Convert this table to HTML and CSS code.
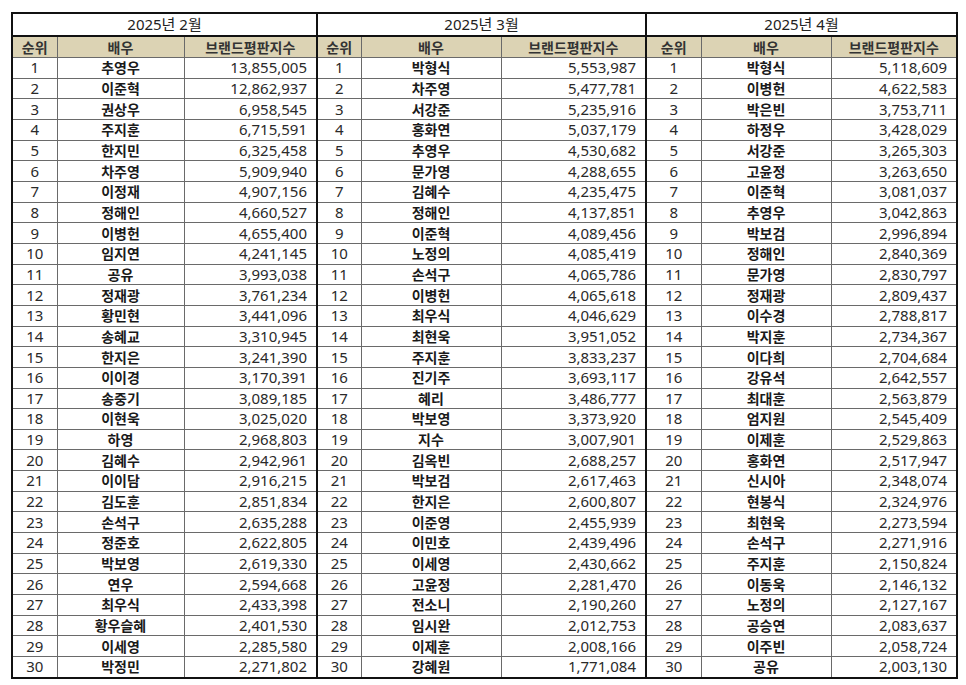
FILE: index.html
```html
<!DOCTYPE html>
<html lang="ko">
<head>
<meta charset="utf-8">
<title>배우 브랜드평판</title>
<link rel="stylesheet" href="styles.css">
</head>
<body>
<table class="rank">
<colgroup>
<col class="c-r1"><col class="c-n1"><col class="c-s1">
<col class="c-r2"><col class="c-n2"><col class="c-s2">
<col class="c-r3"><col class="c-n3"><col class="c-s3">
</colgroup>
<thead>
<tr class="title"><th colspan="3" class="sep">2025년 2월</th><th colspan="3" class="sep">2025년 3월</th><th colspan="3">2025년 4월</th></tr>
<tr class="head"><th>순위</th><th>배우</th><th class="sep">브랜드평판지수</th><th>순위</th><th>배우</th><th class="sep">브랜드평판지수</th><th>순위</th><th>배우</th><th>브랜드평판지수</th></tr>
</thead>
<tbody>
<tr><td>1</td><td class="n">추영우</td><td class="s sep">13,855,005</td><td>1</td><td class="n">박형식</td><td class="s sep">5,553,987</td><td>1</td><td class="n">박형식</td><td class="s">5,118,609</td></tr>
<tr><td>2</td><td class="n">이준혁</td><td class="s sep">12,862,937</td><td>2</td><td class="n">차주영</td><td class="s sep">5,477,781</td><td>2</td><td class="n">이병헌</td><td class="s">4,622,583</td></tr>
<tr><td>3</td><td class="n">권상우</td><td class="s sep">6,958,545</td><td>3</td><td class="n">서강준</td><td class="s sep">5,235,916</td><td>3</td><td class="n">박은빈</td><td class="s">3,753,711</td></tr>
<tr><td>4</td><td class="n">주지훈</td><td class="s sep">6,715,591</td><td>4</td><td class="n">홍화연</td><td class="s sep">5,037,179</td><td>4</td><td class="n">하정우</td><td class="s">3,428,029</td></tr>
<tr><td>5</td><td class="n">한지민</td><td class="s sep">6,325,458</td><td>5</td><td class="n">추영우</td><td class="s sep">4,530,682</td><td>5</td><td class="n">서강준</td><td class="s">3,265,303</td></tr>
<tr><td>6</td><td class="n">차주영</td><td class="s sep">5,909,940</td><td>6</td><td class="n">문가영</td><td class="s sep">4,288,655</td><td>6</td><td class="n">고윤정</td><td class="s">3,263,650</td></tr>
<tr><td>7</td><td class="n">이정재</td><td class="s sep">4,907,156</td><td>7</td><td class="n">김혜수</td><td class="s sep">4,235,475</td><td>7</td><td class="n">이준혁</td><td class="s">3,081,037</td></tr>
<tr><td>8</td><td class="n">정해인</td><td class="s sep">4,660,527</td><td>8</td><td class="n">정해인</td><td class="s sep">4,137,851</td><td>8</td><td class="n">추영우</td><td class="s">3,042,863</td></tr>
<tr><td>9</td><td class="n">이병헌</td><td class="s sep">4,655,400</td><td>9</td><td class="n">이준혁</td><td class="s sep">4,089,456</td><td>9</td><td class="n">박보검</td><td class="s">2,996,894</td></tr>
<tr><td>10</td><td class="n">임지연</td><td class="s sep">4,241,145</td><td>10</td><td class="n">노정의</td><td class="s sep">4,085,419</td><td>10</td><td class="n">정해인</td><td class="s">2,840,369</td></tr>
<tr><td>11</td><td class="n">공유</td><td class="s sep">3,993,038</td><td>11</td><td class="n">손석구</td><td class="s sep">4,065,786</td><td>11</td><td class="n">문가영</td><td class="s">2,830,797</td></tr>
<tr><td>12</td><td class="n">정재광</td><td class="s sep">3,761,234</td><td>12</td><td class="n">이병헌</td><td class="s sep">4,065,618</td><td>12</td><td class="n">정재광</td><td class="s">2,809,437</td></tr>
<tr><td>13</td><td class="n">황민현</td><td class="s sep">3,441,096</td><td>13</td><td class="n">최우식</td><td class="s sep">4,046,629</td><td>13</td><td class="n">이수경</td><td class="s">2,788,817</td></tr>
<tr><td>14</td><td class="n">송혜교</td><td class="s sep">3,310,945</td><td>14</td><td class="n">최현욱</td><td class="s sep">3,951,052</td><td>14</td><td class="n">박지훈</td><td class="s">2,734,367</td></tr>
<tr><td>15</td><td class="n">한지은</td><td class="s sep">3,241,390</td><td>15</td><td class="n">주지훈</td><td class="s sep">3,833,237</td><td>15</td><td class="n">이다희</td><td class="s">2,704,684</td></tr>
<tr><td>16</td><td class="n">이이경</td><td class="s sep">3,170,391</td><td>16</td><td class="n">진기주</td><td class="s sep">3,693,117</td><td>16</td><td class="n">강유석</td><td class="s">2,642,557</td></tr>
<tr><td>17</td><td class="n">송중기</td><td class="s sep">3,089,185</td><td>17</td><td class="n">혜리</td><td class="s sep">3,486,777</td><td>17</td><td class="n">최대훈</td><td class="s">2,563,879</td></tr>
<tr><td>18</td><td class="n">이현욱</td><td class="s sep">3,025,020</td><td>18</td><td class="n">박보영</td><td class="s sep">3,373,920</td><td>18</td><td class="n">엄지원</td><td class="s">2,545,409</td></tr>
<tr><td>19</td><td class="n">하영</td><td class="s sep">2,968,803</td><td>19</td><td class="n">지수</td><td class="s sep">3,007,901</td><td>19</td><td class="n">이제훈</td><td class="s">2,529,863</td></tr>
<tr><td>20</td><td class="n">김혜수</td><td class="s sep">2,942,961</td><td>20</td><td class="n">김옥빈</td><td class="s sep">2,688,257</td><td>20</td><td class="n">홍화연</td><td class="s">2,517,947</td></tr>
<tr><td>21</td><td class="n">이이담</td><td class="s sep">2,916,215</td><td>21</td><td class="n">박보검</td><td class="s sep">2,617,463</td><td>21</td><td class="n">신시아</td><td class="s">2,348,074</td></tr>
<tr><td>22</td><td class="n">김도훈</td><td class="s sep">2,851,834</td><td>22</td><td class="n">한지은</td><td class="s sep">2,600,807</td><td>22</td><td class="n">현봉식</td><td class="s">2,324,976</td></tr>
<tr><td>23</td><td class="n">손석구</td><td class="s sep">2,635,288</td><td>23</td><td class="n">이준영</td><td class="s sep">2,455,939</td><td>23</td><td class="n">최현욱</td><td class="s">2,273,594</td></tr>
<tr><td>24</td><td class="n">정준호</td><td class="s sep">2,622,805</td><td>24</td><td class="n">이민호</td><td class="s sep">2,439,496</td><td>24</td><td class="n">손석구</td><td class="s">2,271,916</td></tr>
<tr><td>25</td><td class="n">박보영</td><td class="s sep">2,619,330</td><td>25</td><td class="n">이세영</td><td class="s sep">2,430,662</td><td>25</td><td class="n">주지훈</td><td class="s">2,150,824</td></tr>
<tr><td>26</td><td class="n">연우</td><td class="s sep">2,594,668</td><td>26</td><td class="n">고윤정</td><td class="s sep">2,281,470</td><td>26</td><td class="n">이동욱</td><td class="s">2,146,132</td></tr>
<tr><td>27</td><td class="n">최우식</td><td class="s sep">2,433,398</td><td>27</td><td class="n">전소니</td><td class="s sep">2,190,260</td><td>27</td><td class="n">노정의</td><td class="s">2,127,167</td></tr>
<tr><td>28</td><td class="n">황우슬혜</td><td class="s sep">2,401,530</td><td>28</td><td class="n">임시완</td><td class="s sep">2,012,753</td><td>28</td><td class="n">공승연</td><td class="s">2,083,637</td></tr>
<tr><td>29</td><td class="n">이세영</td><td class="s sep">2,285,580</td><td>29</td><td class="n">이제훈</td><td class="s sep">2,008,166</td><td>29</td><td class="n">이주빈</td><td class="s">2,058,724</td></tr>
<tr><td>30</td><td class="n">박정민</td><td class="s sep">2,271,802</td><td>30</td><td class="n">강혜원</td><td class="s sep">1,771,084</td><td>30</td><td class="n">공유</td><td class="s">2,003,130</td></tr>
</tbody>
</table>
</body>
</html>
```

FILE: styles.css
```css
html, body {
  margin: 0;
  padding: 0;
  background: #ffffff;
}

body {
  padding: 12px 0 0 11px;
  font-family: "Noto Sans", "Noto Sans CJK KR", sans-serif;
  font-size: 15px;
  color: #222222;
}

.rank {
  border-collapse: collapse;
  table-layout: fixed;
  width: 945px;
  border: 2px solid #111111;
}

.c-r1 { width: 45px; }
.c-n1 { width: 127px; }
.c-s1 { width: 133px; }
.c-r2 { width: 44px; }
.c-n2 { width: 140px; }
.c-s2 { width: 145px; }
.c-r3 { width: 55px; }
.c-n3 { width: 130px; }
.c-s3 { width: 126px; }

.rank th,
.rank td {
  border: 1px solid #6a6a6a;
  padding: 0;
  line-height: 19px;
  text-align: center;
  white-space: nowrap;
  overflow: hidden;
}

.rank .sep {
  border-right: 2px solid #111111;
}

.title th {
  height: 21px;
  font-weight: normal;
  color: #222222;
  border-bottom: 2px solid #111111;
}

.head th {
  height: 20px;
  background: #dcd3b4;
  font-size: 14px;
  font-weight: bold;
  color: #333333;
}

.rank tbody tr {
  height: 20.66px;
}

.rank td {
  height: 19.66px;
  color: #2a2a2a;
}

.rank td.n {
  font-size: 14px;
  font-weight: bold;
  color: #1a1a1a;
}

.rank td.s {
  text-align: right;
  padding-right: 9px;
}
```
